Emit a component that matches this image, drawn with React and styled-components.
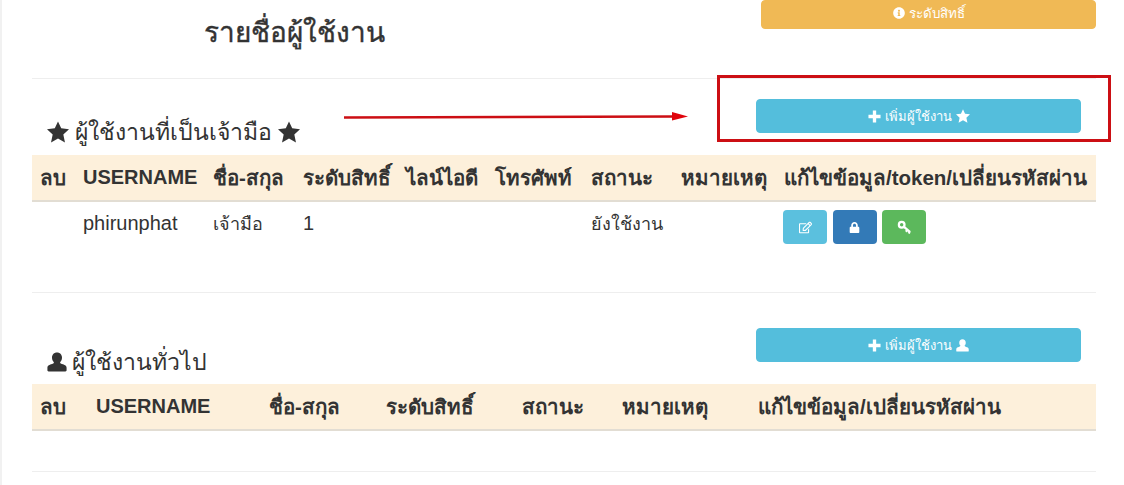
import React from "react";
import styled, { createGlobalStyle } from "styled-components";
import { FaInfoCircle, FaRegEdit, FaLock } from "react-icons/fa";

const Global = createGlobalStyle`
  html, body { margin: 0; padding: 0; background: #fff; }
  body { font-family: "Liberation Sans", "Noto Sans", Arial, sans-serif; color: #333; overflow: hidden; }
`;

const Page = styled.div`
  position: relative;
  width: 1124px;
  height: 485px;
  box-sizing: border-box;
  border-left: 2px solid #f1f1f1;
  padding: 0 28px 0 30px;
  overflow: hidden;
`;

const TopBar = styled.div`
  display: flex;
  justify-content: space-between;
  height: 78px;
`;

const Title = styled.h2`
  margin: 15px 0 0 172px;
  font-size: 28px;
  line-height: 36px;
  font-weight: 500;
  -webkit-text-stroke: 0.4px #333;
  color: #333;
`;

const Rule = styled.hr`
  margin: 0;
  border: 0;
  border-top: 1px solid #eee;
`;

const ActionButton = styled.button`
  display: flex;
  align-items: center;
  justify-content: center;
  gap: 4px;
  box-sizing: border-box;
  width: ${p => p.$width}px;
  height: ${p => p.$height}px;
  margin: ${p => p.$margin};
  padding: 0 0 ${p => p.$lift ?? 0}px;
  border: 1px solid ${p => p.$color};
  border-radius: 4px;
  background: ${p => p.$color};
  color: #fff;
  font: ${p => p.$font ?? 13}px "Liberation Sans", "Noto Sans", sans-serif;
  svg { flex: none; }
`;

const SectionHead = styled.div`
  display: flex;
  justify-content: space-between;
  align-items: flex-start;
  height: ${p => p.$height}px;
`;

const Heading = styled.h3`
  display: flex;
  align-items: center;
  gap: ${p => p.$gap}px;
  margin: ${p => p.$top}px 0 0 15px;
  font-size: 23px;
  line-height: 30px;
  font-weight: 400;
  color: #333;
`;

const Table = styled.table`
  width: 1064px;
  border-collapse: separate;
  border-spacing: 0;
  table-layout: fixed;
`;

const HeadCell = styled.th`
  height: 45px;
  box-sizing: content-box;
  padding: 0 0 0 8px;
  background: #fdf0db;
  border-bottom: 2px solid #e2ddd3;
  text-align: left;
  font-size: ${p => p.$size ?? 20.5}px;
  font-weight: 700;
  color: #333;
  white-space: nowrap;
`;

const Cell = styled.td`
  height: 43px;
  padding: 0 0 0 8px;
  font-size: ${p => p.$size ?? 18}px;
  color: #333;
  white-space: nowrap;
`;

const CellActions = styled.div`
  display: flex;
  gap: 5.5px;
  margin-left: -1px;
  padding-top: 7px;
`;

const IconButton = styled.span`
  display: flex;
  align-items: center;
  justify-content: center;
  width: 44px;
  height: 34px;
  border-radius: 4px;
  background: ${p => p.$color};
  color: #fff;
  font-size: 13px;
`;

const Spacer = styled.div`
  height: ${p => p.$height}px;
`;

const RedBox = styled.div`
  position: absolute;
  left: 715px;
  top: 75px;
  width: 394px;
  height: 67px;
  box-sizing: border-box;
  border: 3px solid #cc0f14;
`;

const Arrow = styled.svg`
  position: absolute;
  left: 339px;
  top: 108px;
`;

const Star = ({ size }) => (
  <svg width={size} height={size} viewBox="0 0 24 24" fill="currentColor">
    <polygon points="12,0.500 15.500,8 24,9 17.800,14.800 19.600,23.500 12,19.200 4.400,23.500 6.200,14.800 0,9 8.500,8" />
  </svg>
);

const User = ({ size }) => (
  <svg width={size} height={size} viewBox="0 0 24 24" fill="currentColor">
    <path d="M12 .5c3.800 0 6 2.700 6 6.200 0 2.300-.9 4.300-2.300 5.500.2 1.200 1 1.700 2.300 2.100 2.800.9 5.500 1.700 5.500 4.700V22c0 .8-.6 1.300-1.400 1.300H1.900C1.100 23.300.5 22.800 .5 22v-3c0-3 2.700-3.800 5.500-4.700 1.300-.4 2.100-.9 2.300-2.100C6.900 11 6 9 6 6.700 6 3.200 8.200.5 12 .5z" />
  </svg>
);

const Plus = ({ size }) => (
  <svg width={size} height={size} viewBox="0 0 14 14" fill="currentColor">
    <path d="M5.200 0.500h3.600v4.700h4.700v3.600H8.800v4.700H5.200V8.800H0.500V5.200h4.700z" />
  </svg>
);

const Key = ({ size }) => (
  <svg width={size} height={size} viewBox="0 0 16 16" fill="none" stroke="currentColor">
    <circle cx="5" cy="5" r="3" strokeWidth="2.400" />
    <path d="M7.500 7.300 L14 13 M11 10.500 L9.500 12.500 M13.500 12.500 L12.500 14.500" strokeWidth="2.400" />
  </svg>
);

const ownerCols = [43, 130, 90, 103, 89, 96, 90, 103, 320];
const generalCols = [56, 173, 117, 136, 100, 136, 346];

const Cols = ({ widths }) => (
  <colgroup>
    {widths.map((w, i) => <col key={i} style={{ width: w }} />)}
  </colgroup>
);

export default function App() {
  return (
    <Page>
      <Global />
      <TopBar>
        <Title>รายชื่อผู้ใช้งาน</Title>
        <ActionButton $width={335} $height={29} $margin="0" $color="#f0b955" $lift={3} $font={13.4}>
          <FaInfoCircle size={12} /> ระดับสิทธิ์
        </ActionButton>
      </TopBar>
      <Rule />

      <SectionHead $height={76}>
        <Heading $top={38} $gap={6}>
          <Star size={22} />
          ผู้ใช้งานที่เป็นเจ้ามือ
          <Star size={22} />
        </Heading>
        <ActionButton $width={325} $height={34} $margin="20px 15px 0 0" $color="#54bedc">
          <Plus size={13} /> เพิ่มผู้ใช้งาน <Star size={14} />
        </ActionButton>
      </SectionHead>
      <Table>
        <Cols widths={ownerCols} />
        <thead>
          <tr>
            <HeadCell>ลบ</HeadCell>
            <HeadCell $size={20}>USERNAME</HeadCell>
            <HeadCell>ชื่อ-สกุล</HeadCell>
            <HeadCell>ระดับสิทธิ์</HeadCell>
            <HeadCell>ไลน์ไอดี</HeadCell>
            <HeadCell>โทรศัพท์</HeadCell>
            <HeadCell>สถานะ</HeadCell>
            <HeadCell>หมายเหตุ</HeadCell>
            <HeadCell>แก้ไขข้อมูล/token/เปลี่ยนรหัสผ่าน</HeadCell>
          </tr>
        </thead>
        <tbody>
          <tr>
            <Cell />
            <Cell $size={20}>phirunphat</Cell>
            <Cell>เจ้ามือ</Cell>
            <Cell $size={20}>1</Cell>
            <Cell />
            <Cell />
            <Cell>ยังใช้งาน</Cell>
            <Cell />
            <Cell>
              <CellActions>
                <IconButton $color="#5bc0de"><FaRegEdit /></IconButton>
                <IconButton $color="#337ab7"><FaLock size={11} /></IconButton>
                <IconButton $color="#5cb85c"><Key size={15} /></IconButton>
              </CellActions>
            </Cell>
          </tr>
        </tbody>
      </Table>
      <Spacer $height={47} />
      <Rule />

      <SectionHead $height={91}>
        <Heading $top={54} $gap={5}>
          <User size={20} />
          ผู้ใช้งานทั่วไป
        </Heading>
        <ActionButton $width={325} $height={34} $margin="35px 15px 0 0" $color="#54bedc">
          <Plus size={13} /> เพิ่มผู้ใช้งาน <User size={13} />
        </ActionButton>
      </SectionHead>
      <Table>
        <Cols widths={generalCols} />
        <thead>
          <tr>
            <HeadCell>ลบ</HeadCell>
            <HeadCell $size={20}>USERNAME</HeadCell>
            <HeadCell>ชื่อ-สกุล</HeadCell>
            <HeadCell>ระดับสิทธิ์</HeadCell>
            <HeadCell>สถานะ</HeadCell>
            <HeadCell>หมายเหตุ</HeadCell>
            <HeadCell>แก้ไขข้อมูล/เปลี่ยนรหัสผ่าน</HeadCell>
          </tr>
        </thead>
      </Table>
      <Spacer $height={40} />
      <Rule />

      <RedBox />
      <Arrow width="350" height="18" viewBox="0 0 350 18">
        <path d="M3 9.500 L334 8.500" stroke="#cc0f14" strokeWidth="2.500" fill="none" />
        <path d="M331 4 L347 8.500 L331 12.500 Z" fill="#e0040c" />
      </Arrow>
    </Page>
  );
}
